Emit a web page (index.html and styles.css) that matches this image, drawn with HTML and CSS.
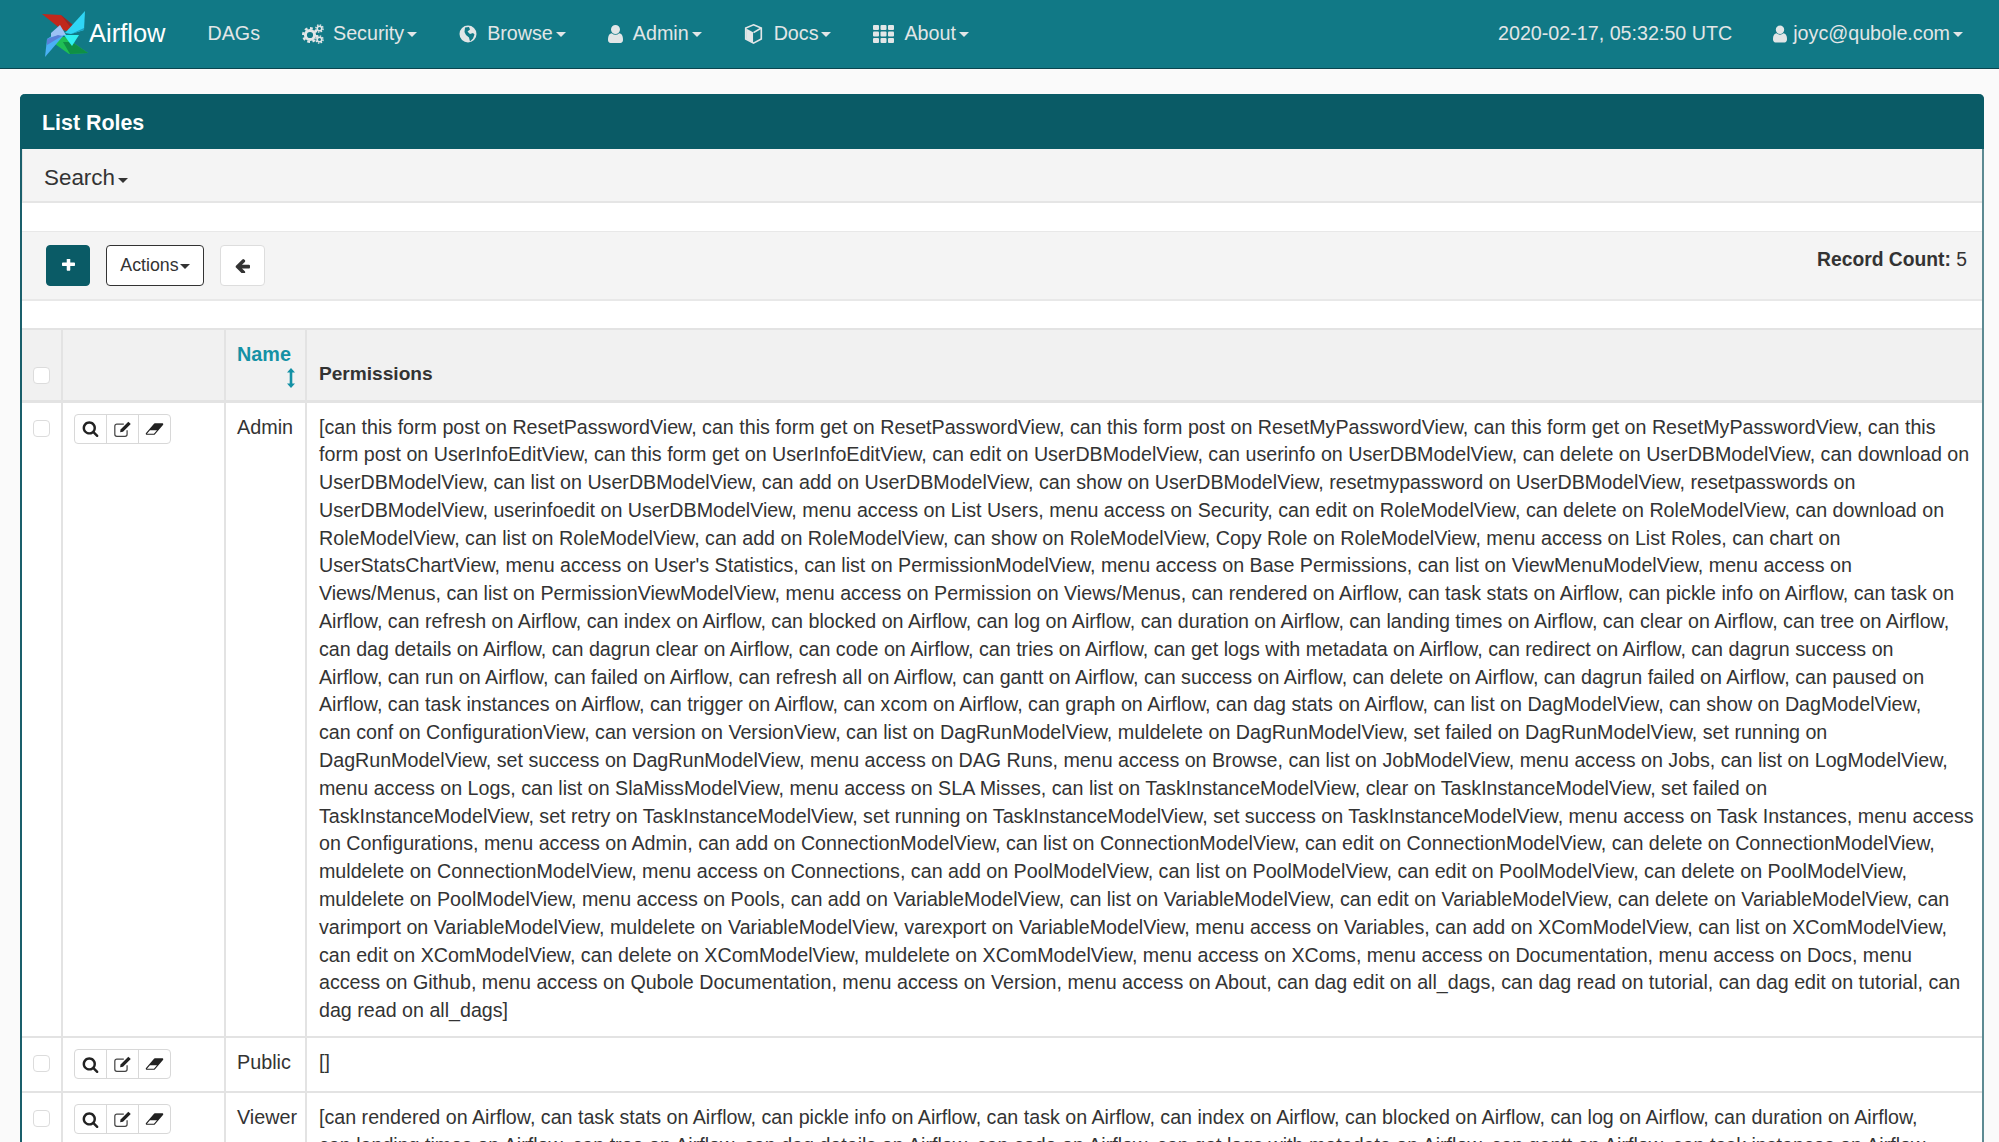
FILE: index.html
```html
<!DOCTYPE html>
<html lang="en">
<head>
    <meta charset="utf-8">
    <title>List Roles - Airflow</title>
    <link rel="stylesheet" href="styles.css">
</head>
<body>
    <svg class="defs" width="0" height="0">
        <symbol id="i-search" viewBox="0 0 1792 1792"><path d="M1216 832q0-185-131.5-316.5t-316.5-131.5-316.5 131.5-131.5 316.5 131.5 316.5 316.5 131.5 316.5-131.5 131.5-316.5zm512 832q0 52-38 90t-90 38q-54 0-90-38l-343-342q-179 124-399 124-143 0-273.5-55.5t-225-150-150-225-55.5-273.5 55.5-273.5 150-225 225-150 273.5-55.5 273.5 55.5 225 150 150 225 55.5 273.5q0 220-124 399l343 343q37 37 37 90z"/></symbol>
        <symbol id="i-user" viewBox="256 128 1280 1536"><path d="M1536 1399q0 109-62.5 187t-150.5 78h-854q-88 0-150.5-78t-62.5-187q0-85 8.5-160.5t31.5-152 58.5-131 94-89 134.5-34.5q131 128 313 128t313-128q76 0 134.5 34.5t94 89 58.5 131 31.5 152 8.5 160.5zm-256-887q0 159-112.5 271.5t-271.5 112.5-271.5-112.5-112.5-271.5 112.5-271.5 271.5-112.5 271.5 112.5 112.5 271.5z"/></symbol>
        <symbol id="i-eraser" viewBox="0 128 2048 1536"><path d="M960 1408l336-384h-768l-336 384h768zm1013-1077q15 34 9.5 71.5t-30.5 65.5l-896 1024q-38 44-96 44h-768q-38 0-69.5-20.5t-47.5-54.5q-15-34-9.5-71.5t30.5-65.5l896-1024q38-44 96-44h768q38 0 70 20.5t47 54.5z"/></symbol>
        <symbol id="i-edit" viewBox="0 0 24 22">
            <path d="M17 12.5v5a2.5 2.5 0 0 1-2.5 2.5h-10A2.5 2.5 0 0 1 2 17.500v-10A2.500 2.500 0 0 1 4.500 5h8.500" fill="none" stroke="currentColor" stroke-width="1.500"/>
            <path d="M9 11.500 18.500 2l3 3L12 14.500l-3.500.5z"/>
        </symbol>
    </svg>

    <nav class="navbar">
        <a class="brand">
            <svg class="logo" viewBox="0 0 46 46">
                <polygon points="0,3 19,4 32,15 32,21 20,19" fill="#c1281b"/>
                <polygon points="19,4 32,15 32,21 26,13" fill="#8f2a2a"/>
                <polygon points="43,0 42,19 29,23 23,22" fill="#2fd6f5"/>
                <polygon points="42,17 42,19 29,23 27,24" fill="#1b9fc0"/>
                <polygon points="46,42 27,43 13,33 13,26 23,26" fill="#1fbf55"/>
                <polygon points="46,42 28,43 21,31 30,31" fill="#0f8f45"/>
                <polygon points="22,24 37,24 30,35 27,31" fill="#2ff0f0"/>
                <polygon points="3,46 5,28 20,18 22,24" fill="#4ab0f5"/>
                <polygon points="9,22 18,14 24,24 9,26" fill="#9cc2f5"/>
                <polygon points="5,28 16,24 20,25 5,34" fill="#5a80d8"/>
            </svg>
            <span>Airflow</span>
        </a>
        <ul class="menu">
            <li class="item">DAGs</li>
            <li class="item">
                <svg class="ic ic-cogs" viewBox="0 0 22 20">
                    <circle cx="8" cy="11" r="4.600" fill="none" stroke="currentColor" stroke-width="3"/>
                    <circle cx="8" cy="11" r="6.800" fill="none" stroke="currentColor" stroke-width="2.400" stroke-dasharray="2.800 2.500"/>
                    <circle cx="17.500" cy="4.500" r="2.300" fill="none" stroke="currentColor" stroke-width="1.600"/>
                    <circle cx="17.500" cy="4.500" r="3.600" fill="none" stroke="currentColor" stroke-width="1.400" stroke-dasharray="1.500 1.300"/>
                    <circle cx="17.500" cy="15.500" r="2.300" fill="none" stroke="currentColor" stroke-width="1.600"/>
                    <circle cx="17.500" cy="15.500" r="3.600" fill="none" stroke="currentColor" stroke-width="1.400" stroke-dasharray="1.500 1.300"/>
                </svg>
                Security<i class="caret"></i>
            </li>
            <li class="item">
                <svg class="ic ic-globe" viewBox="0 0 18 20">
                    <circle cx="9" cy="10" r="8.500"/>
                    <path d="M6 3.500 10 3l1 2.500-2.500 2L11 10l3-1 1.500 1.500-1.500 4-3 3-1-4-3-2.500-1.500-3z" fill="#117986"/>
                </svg>
                Browse<i class="caret"></i>
            </li>
            <li class="item">
                <svg class="ic ic-user"><use href="#i-user"/></svg>
                Admin<i class="caret"></i>
            </li>
            <li class="item">
                <svg class="ic ic-cube" viewBox="0 0 20 24">
                    <path d="M10 2 18.500 5.500v12L10 22 1.500 17.500v-12z" fill="none" stroke="currentColor" stroke-width="1.800"/>
                    <path d="M2 6l7.500 4v11.500L2 17.500z"/>
                    <path d="M10 10.500 18.500 5.500" stroke="currentColor" stroke-width="1.800"/>
                </svg>
                Docs<i class="caret"></i>
            </li>
            <li class="item">
                <svg class="ic ic-th" viewBox="0 0 21 18">
                    <rect width="6" height="5" rx="1"/><rect x="7.500" width="6" height="5" rx="1"/><rect x="15" width="6" height="5" rx="1"/>
                    <rect y="6.500" width="6" height="5" rx="1"/><rect x="7.500" y="6.500" width="6" height="5" rx="1"/><rect x="15" y="6.500" width="6" height="5" rx="1"/>
                    <rect y="13" width="6" height="5" rx="1"/><rect x="7.500" y="13" width="6" height="5" rx="1"/><rect x="15" y="13" width="6" height="5" rx="1"/>
                </svg>
                About<i class="caret"></i>
            </li>
        </ul>
        <ul class="menu menu-right">
            <li class="item">2020-02-17, 05:32:50 UTC</li>
            <li class="item item-user">
                <svg class="ic ic-user-small"><use href="#i-user"/></svg>
                joyc@qubole.com<i class="caret"></i>
            </li>
        </ul>
    </nav>

    <main class="content">
        <section class="panel">
            <h1 class="panel-title">List Roles</h1>
            <div class="search-bar">Search<i class="caret caret-dark"></i></div>
            <div class="toolbar">
                <div class="toolbar-buttons">
                    <button class="btn btn-add"><svg class="ic-plus" viewBox="192 256 1408 1408"><path d="M1600 736v192q0 40-28 68t-68 28h-416v416q0 40-28 68t-68 28h-192q-40 0-68-28t-28-68v-416h-416q-40 0-68-28t-28-68v-192q0-40 28-68t68-28h416v-416q0-40 28-68t68-28h192q40 0 68 28t28 68v416h416q40 0 68 28t28 68z"/></svg></button>
                    <button class="btn btn-actions">Actions<i class="caret caret-dark caret-small"></i></button>
                    <button class="btn btn-back"><svg class="ic-back" viewBox="128 256 1536 1280"><path d="M1664 896v128q0 53-32.500 90.500t-84.500 37.500h-704l293 294q38 36 38 90t-38 90l-75 76q-37 37-90 37-52 0-91-37l-651-652q-37-37-37-90 0-52 37-91l651-650q38-38 91-38 52 0 90 38l75 74q38 38 38 91t-38 91l-293 293h704q52 0 84.500 37.500t32.500 90.500z"/></svg></button>
                </div>
                <div class="record-count"><b>Record Count:</b> 5</div>
            </div>

            <table class="roles">
                <colgroup>
                    <col class="col-check">
                    <col class="col-actions">
                    <col class="col-name">
                    <col>
                </colgroup>
                <thead>
                    <tr>
                        <th><span class="check"></span></th>
                        <th></th>
                        <th class="th-name">Name
                            <svg class="ic-sort" viewBox="0 0 8 20"><path d="M4 0 8 4.500H5.300v11H8L4 20 0 15.500h2.700v-11H0z"/></svg>
                        </th>
                        <th>Permissions</th>
                    </tr>
                </thead>
                <tbody>
                    <tr class="row-admin">
                        <td><span class="check"></span></td>
                        <td class="cell-buttons">
                            <div class="btn-group">
                                <a><svg class="bi bi-search"><use href="#i-search"/></svg></a>
                                <a><svg class="bi bi-edit"><use href="#i-edit"/></svg></a>
                                <a><svg class="bi bi-eraser"><use href="#i-eraser"/></svg></a>
                            </div>
                        </td>
                        <td class="cell-name">Admin</td>
                        <td class="cell-lines">[can this form post on ResetPasswordView, can this form get on ResetPasswordView, can this form post on ResetMyPasswordView, can this form get on ResetMyPasswordView, can this<br>
form post on UserInfoEditView, can this form get on UserInfoEditView, can edit on UserDBModelView, can userinfo on UserDBModelView, can delete on UserDBModelView, can download on<br>
UserDBModelView, can list on UserDBModelView, can add on UserDBModelView, can show on UserDBModelView, resetmypassword on UserDBModelView, resetpasswords on<br>
UserDBModelView, userinfoedit on UserDBModelView, menu access on List Users, menu access on Security, can edit on RoleModelView, can delete on RoleModelView, can download on<br>
RoleModelView, can list on RoleModelView, can add on RoleModelView, can show on RoleModelView, Copy Role on RoleModelView, menu access on List Roles, can chart on<br>
UserStatsChartView, menu access on User's Statistics, can list on PermissionModelView, menu access on Base Permissions, can list on ViewMenuModelView, menu access on<br>
Views/Menus, can list on PermissionViewModelView, menu access on Permission on Views/Menus, can rendered on Airflow, can task stats on Airflow, can pickle info on Airflow, can task on<br>
Airflow, can refresh on Airflow, can index on Airflow, can blocked on Airflow, can log on Airflow, can duration on Airflow, can landing times on Airflow, can clear on Airflow, can tree on Airflow,<br>
can dag details on Airflow, can dagrun clear on Airflow, can code on Airflow, can tries on Airflow, can get logs with metadata on Airflow, can redirect on Airflow, can dagrun success on<br>
Airflow, can run on Airflow, can failed on Airflow, can refresh all on Airflow, can gantt on Airflow, can success on Airflow, can delete on Airflow, can dagrun failed on Airflow, can paused on<br>
Airflow, can task instances on Airflow, can trigger on Airflow, can xcom on Airflow, can graph on Airflow, can dag stats on Airflow, can list on DagModelView, can show on DagModelView,<br>
can conf on ConfigurationView, can version on VersionView, can list on DagRunModelView, muldelete on DagRunModelView, set failed on DagRunModelView, set running on<br>
DagRunModelView, set success on DagRunModelView, menu access on DAG Runs, menu access on Browse, can list on JobModelView, menu access on Jobs, can list on LogModelView,<br>
menu access on Logs, can list on SlaMissModelView, menu access on SLA Misses, can list on TaskInstanceModelView, clear on TaskInstanceModelView, set failed on<br>
TaskInstanceModelView, set retry on TaskInstanceModelView, set running on TaskInstanceModelView, set success on TaskInstanceModelView, menu access on Task Instances, menu access<br>
on Configurations, menu access on Admin, can add on ConnectionModelView, can list on ConnectionModelView, can edit on ConnectionModelView, can delete on ConnectionModelView,<br>
muldelete on ConnectionModelView, menu access on Connections, can add on PoolModelView, can list on PoolModelView, can edit on PoolModelView, can delete on PoolModelView,<br>
muldelete on PoolModelView, menu access on Pools, can add on VariableModelView, can list on VariableModelView, can edit on VariableModelView, can delete on VariableModelView, can<br>
varimport on VariableModelView, muldelete on VariableModelView, varexport on VariableModelView, menu access on Variables, can add on XComModelView, can list on XComModelView,<br>
can edit on XComModelView, can delete on XComModelView, muldelete on XComModelView, menu access on XComs, menu access on Documentation, menu access on Docs, menu<br>
access on Github, menu access on Qubole Documentation, menu access on Version, menu access on About, can dag edit on all_dags, can dag read on tutorial, can dag edit on tutorial, can<br>
dag read on all_dags]</td>
                    </tr>
                    <tr>
                        <td><span class="check"></span></td>
                        <td class="cell-buttons">
                            <div class="btn-group">
                                <a><svg class="bi bi-search"><use href="#i-search"/></svg></a>
                                <a><svg class="bi bi-edit"><use href="#i-edit"/></svg></a>
                                <a><svg class="bi bi-eraser"><use href="#i-eraser"/></svg></a>
                            </div>
                        </td>
                        <td class="cell-name">Public</td>
                        <td>[]</td>
                    </tr>
                    <tr>
                        <td><span class="check"></span></td>
                        <td class="cell-buttons">
                            <div class="btn-group">
                                <a><svg class="bi bi-search"><use href="#i-search"/></svg></a>
                                <a><svg class="bi bi-edit"><use href="#i-edit"/></svg></a>
                                <a><svg class="bi bi-eraser"><use href="#i-eraser"/></svg></a>
                            </div>
                        </td>
                        <td class="cell-name">Viewer</td>
                        <td>[can rendered on Airflow, can task stats on Airflow, can pickle info on Airflow, can task on Airflow, can index on Airflow, can blocked on Airflow, can log on Airflow, can duration on Airflow,<br>
can landing times on Airflow, can tree on Airflow, can dag details on Airflow, can code on Airflow, can get logs with metadata on Airflow, can gantt on Airflow, can task instances on Airflow</td>
                    </tr>
                </tbody>
            </table>
        </section>
    </main>
</body>
</html>
```

FILE: styles.css
```css
html, body
{
    height: 1142px;
    overflow: hidden;
}
body
{
    margin: 0;
    background: #fafafa;
    color: #333333;
    font-family: "Liberation Sans", Arial, sans-serif;
    font-size: 19.66px;
    line-height: 27.8px;
}
.defs
{
    position: absolute;
}

/* top bar */
.navbar
{
    display: flex;
    align-items: center;
    height: 68px;
    padding: 0 36px 0 42px;
    background: #117986;
    border-bottom: 1px solid #0a4650;
    color: #e2e6e7;
    font-size: 19.7px;
}
.brand
{
    display: flex;
    align-items: center;
    color: #ffffff;
    font-size: 25.5px;
}
.logo
{
    width: 46px;
    height: 46px;
    margin-right: 1px;
}
.menu
{
    display: flex;
    align-items: center;
    gap: 42px;
    margin: 0 0 0 42px;
    padding: 0;
    list-style: none;
}
.menu-right
{
    gap: 41px;
    margin-left: auto;
}
.item
{
    display: flex;
    align-items: center;
}
.ic
{
    fill: currentColor;
    margin-right: 10px;
}
.ic-cogs
{
    width: 22px;
    height: 20px;
    margin-right: 9px;
}
.ic-globe
{
    width: 18px;
    height: 20px;
    margin-right: 10px;
}
.ic-user
{
    width: 15px;
    height: 18px;
}
.ic-cube
{
    width: 19px;
    height: 22px;
    margin-right: 11px;
}
.ic-th
{
    width: 21px;
    height: 18px;
}
.ic-user-small
{
    width: 14px;
    height: 18px;
    margin-right: 6px;
}
.caret
{
    display: inline-block;
    margin-left: 3px;
    margin-top: 2px;
    border-top: 5px solid currentColor;
    border-left: 5.500px solid transparent;
    border-right: 5.500px solid transparent;
}
.caret-dark
{
    color: #333333;
}
.caret-small
{
    margin-left: 1px;
    vertical-align: middle;
}

/* panel */
.content
{
    padding: 25px 15px 0 20px;
}
.panel
{
    border-left: 2px solid #1a5f6b;
    border-right: 2px solid #5d8a92;
    background: #ffffff;
    border-radius: 5px 5px 0 0;
}
.panel-title
{
    margin: 0 -2px;
    padding: 0 22px;
    height: 55px;
    line-height: 59px;
    background: #0a5b66;
    color: #ffffff;
    font-size: 21.4px;
    font-weight: bold;
    border-radius: 5px 5px 0 0;
}
.search-bar
{
    height: 52px;
    padding-left: 21px;
    line-height: 57px;
    background: #f4f4f4;
    border-bottom: 2px solid #e5e5e5;
    border-left: 1px solid #e5e5e5;
    font-size: 22.4px;
}
.search-bar .caret
{
    margin-left: 3px;
    vertical-align: middle;
}
.toolbar
{
    display: flex;
    justify-content: space-between;
    height: 67px;
    margin-top: 28px;
    background: #f4f4f4;
    border-top: 1px solid #e8e8e8;
    border-bottom: 2px solid #e8e8e8;
}
.toolbar-buttons
{
    display: flex;
    gap: 16px;
    padding: 13px 0 0 24px;
}
.btn
{
    display: flex;
    align-items: center;
    justify-content: center;
    height: 41px;
    padding: 0;
    border-radius: 4px;
    font-family: inherit;
    background: #ffffff;
    color: #333333;
}
.btn-add
{
    width: 44px;
    background: #0a5b66;
    border: 1px solid #0a5b66;
}
.ic-plus
{
    width: 13px;
    height: 13px;
    fill: #ffffff;
}
.btn-actions
{
    width: 98px;
    border: 1px solid #333333;
    font-size: 17.8px;
}
.btn-back
{
    width: 45px;
    border: 1px solid #dddddd;
}
.ic-back
{
    width: 15px;
    height: 14px;
    fill: #333333;
}
.record-count
{
    padding: 14px 15px 0 0;
    font-size: 19.3px;
}

/* table */
.roles
{
    width: 100%;
    margin-top: 27px;
    border-collapse: collapse;
    table-layout: fixed;
}
.col-check
{
    width: 40px;
}
.col-actions
{
    width: 163px;
}
.col-name
{
    width: 81px;
}
.roles th
{
    box-sizing: border-box;
    height: 72px;
    padding: 0 12px 12px;
    background: #f1f1f1;
    border: 2px solid #e3e3e3;
    border-width: 2px 2px 3px 2px;
    text-align: left;
    vertical-align: bottom;
    font-size: 19.13px;
}
.roles th:first-child,
.roles td:first-child
{
    border-left: 0;
    padding: 0;
    text-align: center;
}
.roles th:first-child
{
    padding-bottom: 16px;
}
.roles th:last-child,
.roles td:last-child
{
    border-right: 0;
}
.roles td
{
    padding: 11px 12px 11px;
    border: 2px solid #e3e3e3;
    vertical-align: top;
}
.roles td.cell-buttons
{
    padding-left: 11px;
}
.roles td.cell-name
{
    padding-left: 11px;
    font-size: 19.8px;
}
.roles td.cell-lines
{
    white-space: nowrap;
}
.roles th.th-name
{
    padding: 0 0 12px 11px;
    color: #1491a5;
    font-size: 19.8px;
    line-height: 24px;
}
.ic-sort
{
    display: block;
    width: 8px;
    height: 20px;
    margin: 2px 0 0 50px;
    fill: #1491a5;
}
.check
{
    display: inline-block;
    width: 15px;
    height: 15px;
    background: #ffffff;
    border: 1px solid #dcdcdc;
    border-radius: 4px;
}
.roles th:first-child .check
{
    vertical-align: bottom;
}
.roles td:first-child .check
{
    margin-top: 17px;
    vertical-align: top;
}
.btn-group
{
    display: flex;
    width: 97px;
    height: 30px;
    margin-bottom: 1px;
    box-sizing: border-box;
    background: #ffffff;
    border: 1px solid #d8d8d8;
    border-radius: 4px;
}
.btn-group a
{
    display: flex;
    flex: 1;
    align-items: center;
    justify-content: center;
    border-left: 1px solid #d8d8d8;
}
.btn-group a:first-child
{
    border-left: 0;
}
.bi
{
    fill: #222222;
    color: #444444;
}
.bi-search
{
    width: 17px;
    height: 17px;
}
.bi-edit
{
    width: 20px;
    height: 18px;
}
.bi-eraser
{
    width: 19px;
    height: 14px;
}
```
